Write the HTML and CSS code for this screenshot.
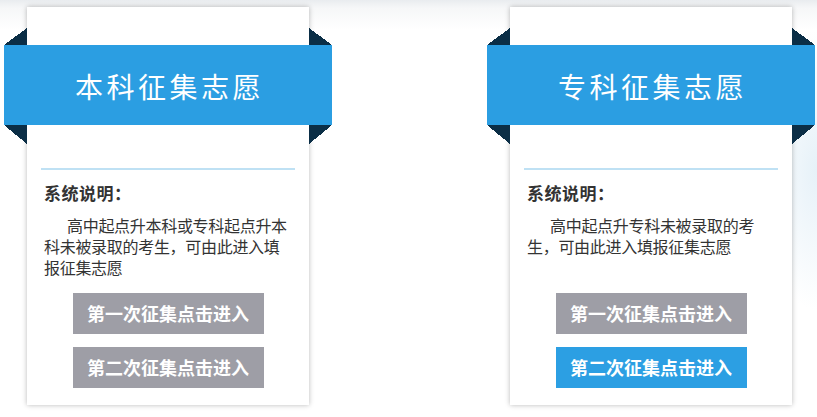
FILE: index.html
```html
<!DOCTYPE html>
<html lang="zh-CN">
<head>
<meta charset="utf-8">
<title>征集志愿</title>
<link rel="stylesheet" href="styles.css">
</head>
<body>
<div class="page">
  <div class="card">
    <div class="ribbon"><h2>本科征集志愿</h2></div>
    <div class="divider"></div>
    <h3>系统说明：</h3>
    <p>高中起点升本科或专科起点升本科未被录取的考生，可由此进入填报征集志愿</p>
    <div class="btns">
      <a class="btn">第一次征集点击进入</a>
      <a class="btn">第二次征集点击进入</a>
    </div>
  </div>
  <div class="card">
    <div class="ribbon"><h2>专科征集志愿</h2></div>
    <div class="divider"></div>
    <h3>系统说明：</h3>
    <p>高中起点升专科未被录取的考生，可由此进入填报征集志愿</p>
    <div class="btns">
      <a class="btn">第一次征集点击进入</a>
      <a class="btn btn-active">第二次征集点击进入</a>
    </div>
  </div>
</div>
</body>
</html>
```
FILE: styles.css
```css
html, body {
  margin: 0;
  padding: 0;
}
body {
  width: 817px;
  height: 417px;
  overflow: hidden;
  font-family: "Noto Sans CJK SC", "Microsoft YaHei", sans-serif;
  background:
    radial-gradient(ellipse 60px 140px at 817px 170px, #e6f1f8 0%, rgba(255,255,255,0) 100%),
    linear-gradient(to bottom, #e9ecef 0px, #f6f7f8 8px, #ffffff 30px);
}
.page {
  display: flex;
  gap: 201px;
  padding: 7px 0 0 27px;
}
.card {
  width: 282px;
  height: 398px;
  background: #fff;
  box-shadow: 0 0 5px rgba(0, 0, 0, 0.28);
  display: flex;
  flex-direction: column;
}
.ribbon {
  position: relative;
  margin: 38px -23px 0;
  height: 80px;
  background: #2b9ee2;
  display: flex;
  align-items: center;
  justify-content: center;
}
.ribbon::before,
.ribbon::after {
  content: "";
  position: absolute;
  left: 0;
  right: 0;
}
.ribbon::before {
  top: -17px;
  height: 17px;
  background:
    linear-gradient(to bottom right, transparent 50%, #0b2e46 50%) left top / 23px 17px no-repeat,
    linear-gradient(to bottom left, transparent 50%, #0b2e46 50%) right top / 23px 17px no-repeat;
}
.ribbon::after {
  bottom: -19px;
  height: 19px;
  background:
    linear-gradient(to top right, transparent 50%, #0b2e46 50%) left top / 23px 19px no-repeat,
    linear-gradient(to top left, transparent 50%, #0b2e46 50%) right top / 23px 19px no-repeat;
}
.ribbon h2 {
  margin: 2px 0 0 3px;
  color: #fff;
  font-size: 28px;
  font-weight: normal;
  letter-spacing: 3.5px;
  line-height: 1;
}
.divider {
  height: 2px;
  background: #bfe1f4;
  margin: 43px 14px 0;
}
h3 {
  margin: 11px 0 0 17px;
  font-size: 17px;
  line-height: 24px;
  font-weight: bold;
  letter-spacing: 0.5px;
  color: #333;
}
p {
  margin: 10px 0 0 17px;
  width: 248px;
  font-size: 16px;
  letter-spacing: -0.3px;
  line-height: 21px;
  text-indent: 23px;
  color: #333;
}
.btns {
  margin-top: auto;
  padding-bottom: 17px;
  display: flex;
  flex-direction: column;
  align-items: center;
  gap: 13px;
}
.btn {
  display: block;
  width: 191px;
  height: 41px;
  line-height: 41px;
  text-align: center;
  color: #fff;
  font-size: 18px;
  font-weight: bold;
  background: #9e9ea6;
}
.btn-active {
  background: #2c9fe3;
}
```
